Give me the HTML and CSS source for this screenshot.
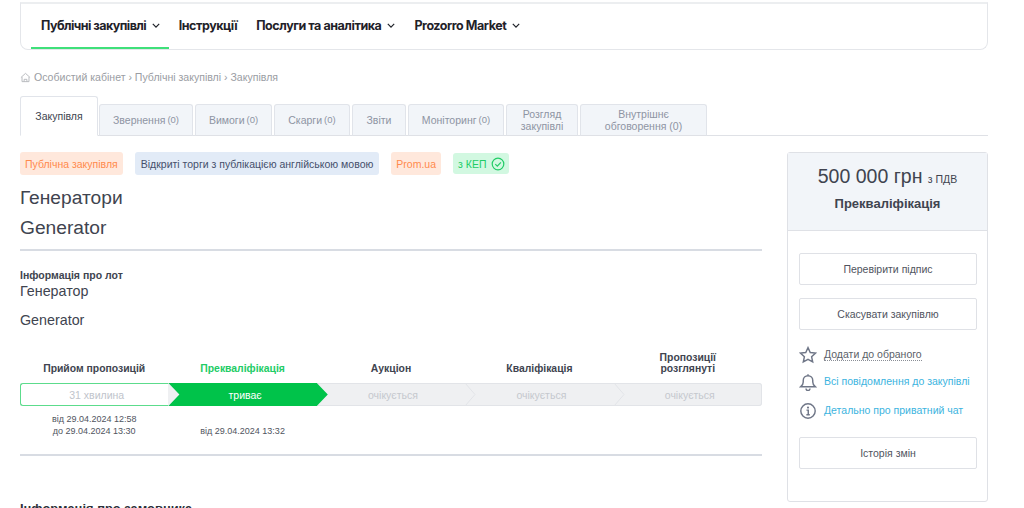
FILE: index.html
```html
<!DOCTYPE html>
<html lang="uk">
<head>
<meta charset="utf-8">
<title>Закупівля</title>
<link rel="stylesheet" href="styles.css">
</head>
<body>
<header class="nav">
  <a class="nav-item active">Публічні закупівлі <svg class="caret" viewBox="0 0 10 6"><path d="M1 1l4 4 4-4"/></svg></a>
  <a class="nav-item">Інструкції</a>
  <a class="nav-item">Послуги та аналітика <svg class="caret" viewBox="0 0 10 6"><path d="M1 1l4 4 4-4"/></svg></a>
  <a class="nav-item">Prozorro Market <svg class="caret" viewBox="0 0 10 6"><path d="M1 1l4 4 4-4"/></svg></a>
</header>

<nav class="crumbs">
  <svg class="home" viewBox="0 0 12 12"><path d="M1 6l5-4.500L11 6M2.200 5.500v5h7.600v-5M4.500 10.500V8h3v2.500"/></svg>
  <span>Особистий кабінет › Публічні закупівлі › Закупівля</span>
</nav>

<div class="tabs">
  <a class="tab current">Закупівля</a>
  <a class="tab t1">Звернення <small>(0)</small></a>
  <a class="tab t2">Вимоги <small>(0)</small></a>
  <a class="tab t3">Скарги <small>(0)</small></a>
  <a class="tab t4">Звіти</a>
  <a class="tab t5">Моніторинг <small>(0)</small></a>
  <a class="tab t6">Розгляд<br>закупівлі</a>
  <a class="tab t7">Внутрішнє<br>обговорення (0)</a>
</div>

<div class="columns">
  <main class="main">
    <div class="badges">
      <span class="badge orange">Публічна закупівля</span>
      <span class="badge blue">Відкриті торги з публікацією англійською мовою</span>
      <span class="badge orange">Prom.ua</span>
      <span class="badge green">з КЕП
        <svg class="check" viewBox="0 0 14 14"><circle cx="7" cy="7" r="5.800"/><path d="M4.300 7.200l2 2 3.600-3.800"/></svg>
      </span>
    </div>
    <h1 class="title">Генератори</h1>
    <h1 class="title en">Generator</h1>
    <hr class="rule">
    <h3 class="lot-head">Інформація про лот</h3>
    <p class="lot">Генератор</p>
    <p class="lot en">Generator</p>

    <div class="stages labels">
      <div>Прийом пропозицій</div>
      <div class="now">Прекваліфікація</div>
      <div>Аукціон</div>
      <div>Кваліфікація</div>
      <div>Пропозиції<br>розглянуті</div>
    </div>
    <div class="bar">
      <div class="seg done">31 хвилина</div>
      <div class="seg live">триває</div>
      <div class="seg wait">очікується<svg class="chev" viewBox="0 0 12 23"><path d="M1 0l10 11.500L1 23"/></svg></div>
      <div class="seg wait">очікується<svg class="chev" viewBox="0 0 12 23"><path d="M1 0l10 11.500L1 23"/></svg></div>
      <div class="seg wait">очікується</div>
    </div>
    <div class="stages dates">
      <div>від 29.04.2024 12:58<br>до 29.04.2024 13:30</div>
      <div><br>від 29.04.2024 13:32</div>
      <div></div><div></div><div></div>
    </div>
    <hr class="rule second">
    <h3 class="buyer">Інформація про замовника</h3>
  </main>

  <aside class="side">
    <div class="side-head">
      <div class="price">500 000 грн <small>з ПДВ</small></div>
      <div class="status">Прекваліфікація</div>
    </div>
    <div class="side-body">
      <a class="btn">Перевірити підпис</a>
      <a class="btn">Скасувати закупівлю</a>
      <div class="links">
        <div class="link fav">
          <svg class="ico" viewBox="0 0 20 20"><path d="M10 1.800l2.500 5.400 5.900.7-4.400 4 1.200 5.800L10 14.800l-5.200 2.900L6 11.900l-4.400-4 5.900-.7z"/></svg>
          <span class="dotted">Додати до обраного</span>
        </div>
        <div class="link">
          <svg class="ico" viewBox="0 0 20 20"><path d="M2 15.200h16c-1.500-1.200-2.700-2.400-2.700-5.200V8.300a5.300 5.300 0 0 0-10.600 0V10c0 2.800-1.200 4-2.700 5.200zM7.800 17.300a2.200 2.200 0 0 0 4.400 0M10 1.500V3"/></svg>
          <a>Всі повідомлення до закупівлі</a>
        </div>
        <div class="link">
          <svg class="ico" viewBox="0 0 20 20"><circle cx="10" cy="10" r="8"/><path d="M8.300 9h2v5M8.200 14.200h3.800"/><circle class="dot" cx="10" cy="6.200" r="1.200"/></svg>
          <a>Детально про приватний чат</a>
        </div>
      </div>
      <a class="btn">Історія змін</a>
    </div>
  </aside>
</div>
</body>
</html>
```

FILE: styles.css
```css
* { box-sizing: border-box; }
html, body { height: 508px; overflow: hidden; }
body {
  margin: 0;
  padding: 0 36px 0 20px;
  font-family: "Liberation Sans", Arial, sans-serif;
  color: #40444f;
  background: #fff;
}
.nav {
  height: 48px;
  margin-top: 2px;
  border: 1px solid #e4e6ea;
  border-top: 2px solid #eceef0;
  border-radius: 0 0 8px 8px;
  display: flex;
  align-items: center;
  padding: 0 10px;
  font-family: Inter, sans-serif;
  font-weight: 700;
  font-size: 12.500px;
  letter-spacing: -0.450px;
  color: #1f2229;
}
.nav-item {
  height: 100%;
  display: flex;
  align-items: center;
  gap: 6px;
  padding: 0 9.500px 2px;
  white-space: nowrap;
}
.nav-item.active {
  box-shadow: inset 0 -2px 0 #3fe07a;
  padding: 0 9px 2px 10px;
  letter-spacing: -0.550px;
}
.caret { width: 8px; height: 5px; fill: none; stroke: #1f2229; stroke-width: 1.500; }
.crumbs {
  margin-top: 20px;
  height: 14px;
  display: flex;
  align-items: center;
  gap: 3px;
  font-size: 10.550px;
  color: #9a9da3;
}
.home { width: 11px; height: 11px; fill: none; stroke: #b5b7bb; stroke-width: 1; }
.tabs {
  margin-top: 12px;
  height: 40px;
  display: flex;
  align-items: flex-end;
  gap: 2px;
  border-bottom: 1px solid #dfe1e6;
}
.tab {
  height: 32px;
  margin-bottom: -1px;
  background: #f2f5f9;
  border: 1px solid #e1e4ea;
  border-bottom-color: #dfe1e6;
  border-radius: 3px 3px 0 0;
  font-size: 10.500px;
  line-height: 12.500px;
  color: #8e94a3;
  text-align: center;
  display: flex;
  align-items: center;
  justify-content: center;
}
.tab small { font-size: 9.500px; margin-left: 2px; }
.tab.current {
  width: 78px;
  height: 40px;
  margin-right: -1px;
  background: #fff;
  border-bottom-color: #fff;
  color: #40444f;
}
.t1 { width: 94px; }
.t2 { width: 77px; }
.t3 { width: 76px; }
.t4 { width: 54px; }
.t5 { width: 96px; }
.t6 { width: 72px; }
.t7 { width: 127px; }
.columns {
  margin-top: 16px;
  display: flex;
  justify-content: space-between;
  align-items: flex-start;
}
.main { width: 742px; }
.badges { display: flex; gap: 12px; align-items: center; height: 23px; }
.badge {
  height: 23px;
  border-radius: 3px;
  padding: 0 5px;
  font-size: 10.500px;
  display: flex;
  align-items: center;
}
.orange { background: #ffe8dc; color: #ff8a4c; }
.blue { background: #e2ebf7; color: #454f6b; padding: 0 6px; }
.green { height: 21px; background: #d2f8e1; color: #22cc66; gap: 5px; padding-right: 4px; }
.check { width: 14px; height: 14px; fill: none; stroke: #22cc66; stroke-width: 1.200; }
.title { margin: 0; font-weight: 400; font-size: 19.200px; line-height: 30px; }
.badges + .title { margin-top: 8px; }
.rule { margin: 6px 0 0; border: 0; border-top: 2px solid #d8dce3; }
.lot-head { margin: 18px 0 0; font-size: 10.500px; line-height: 13px; font-weight: 700; }
.lot { margin: 0; font-size: 14.300px; line-height: 18px; }
.lot.en { margin-top: 11px; }
.stages { display: grid; grid-template-columns: repeat(5, 1fr); text-align: center; }
.labels {
  margin-top: 21px;
  height: 24px;
  align-items: end;
  font-size: 10.400px;
  font-weight: 700;
  line-height: 11px;
  color: #40444f;
}
.labels .now { color: #22cc66; }
.bar {
  margin-top: 9px;
  height: 23px;
  display: flex;
  background: #eff0f2;
  border-radius: 3px;
  box-shadow: inset 0 0 0 1px #e2e4e8;
}
.seg {
  flex: 0 0 20%;
  position: relative;
  display: flex;
  align-items: center;
  justify-content: center;
  padding-left: 4px;
  font-size: 10.500px;
  color: #c5c8ce;
}
.done {
  background: #fff;
  border: 1px solid #5cdc8c;
  border-right: 0;
  border-radius: 3px 0 0 3px;
  color: #c0c4cb;
}
.live {
  flex: 0 0 calc(20% + 11px);
  margin-right: -11px;
  padding: 0 6px 0 0;
  background: #00c34a;
  color: #fff;
  font-size: 10.500px;
  clip-path: polygon(0 0, calc(100% - 11px) 0, 100% 50%, calc(100% - 11px) 100%, 0 100%, 11px 50%);
  z-index: 1;
}
.chev {
  position: absolute;
  right: -11px;
  top: 0;
  width: 12px;
  height: 23px;
  fill: none;
  stroke: #e2e4e8;
}
.dates {
  margin-top: 7px;
  font-size: 9px;
  line-height: 12px;
  color: #50545e;
}
.rule.second { margin-top: 17px; }
.buyer { margin: 45px 0 0; font-size: 12.900px; line-height: 16px; font-weight: 700; color: #2d3038; }
.side {
  width: 201px;
  height: 350px;
  border: 1px solid #dfe1e6;
  border-radius: 3px;
}
.side-head {
  height: 78px;
  background: #f2f5f9;
  border-bottom: 1px solid #dfe1e6;
  text-align: center;
  padding-top: 10px;
}
.price { font-size: 19.500px; line-height: 26px; color: #40444f; }
.price small { font-size: 10.500px; }
.status { margin-top: 3px; font-size: 13px; line-height: 18px; font-weight: 700; }
.side-body { padding: 22px 10px 0 11px; }
.btn {
  height: 32px;
  margin-bottom: 13px;
  background: #fff;
  border: 1px solid #dfe1e6;
  border-radius: 2px;
  font-size: 10.500px;
  color: #50545e;
  display: flex;
  align-items: center;
  justify-content: center;
}
.links { margin-top: 15px; margin-bottom: 17px; display: flex; flex-direction: column; gap: 8px; }
.link {
  height: 19px;
  display: flex;
  align-items: center;
  gap: 7px;
  font-size: 10.500px;
  color: #3cb4e0;
}
.link a { padding-bottom: 2px; }
.link:last-child { margin-top: 2px; }
.ico { width: 18px; height: 18px; flex: none; fill: none; stroke: #6f7687; stroke-width: 1.600; }
.ico .dot { fill: #6f7687; stroke: none; }
.dotted { color: #5b5f69; border-bottom: 1px dotted #8a8e96; line-height: 12px; }
```
